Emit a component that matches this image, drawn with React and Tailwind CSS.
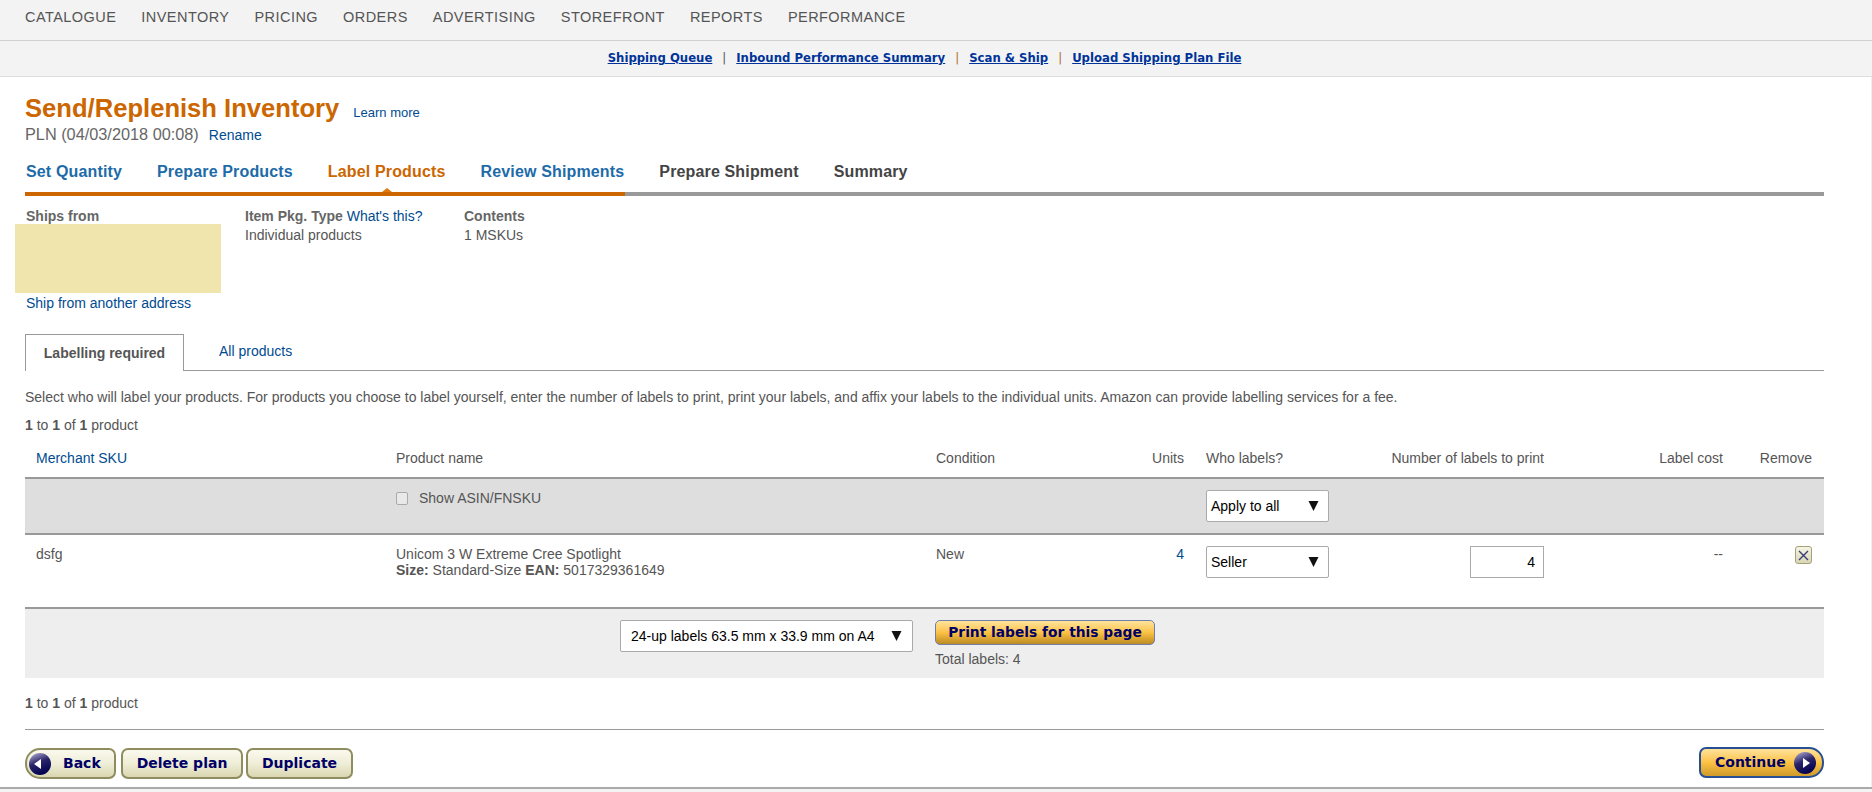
const NAV = ['CATALOGUE', 'INVENTORY', 'PRICING', 'ORDERS', 'ADVERTISING', 'STOREFRONT', 'REPORTS', 'PERFORMANCE']

const STEPS = [
  { label: 'Set Quantity', color: 'text-[#1d6ba8]' },
  { label: 'Prepare Products', color: 'text-[#1d6ba8]' },
  { label: 'Label Products', color: 'text-[#cc6600]' },
  { label: 'Review Shipments', color: 'text-[#1d6ba8]' },
  { label: 'Prepare Shipment', color: 'text-[#444444]' },
  { label: 'Summary', color: 'text-[#444444]' },
]

const TABLE_COLS = 'grid grid-cols-[371px_540px_270px_338px_179px_101px]'
const VERDANA = 'font-["DejaVu_Sans",sans-serif] font-bold text-[#000066]'

function Arrow() {
  return (
    <svg width="11" height="10" viewBox="0 0 11 10" className="shrink-0">
      <polygon points="0.5,0 10.5,0 5.5,10" fill="#111" />
    </svg>
  )
}

function FakeSelect({ children, className }) {
  return (
    <div className={`flex items-center justify-between h-[32px] bg-white border border-[#aaaaaa] rounded-[2px] text-[14px] text-black ${className}`}>
      <span>{children}</span>
      <Arrow />
    </div>
  )
}

function RoundIcon({ dir }) {
  return (
    <svg width="24" height="24" viewBox="0 0 24 24" className="shrink-0">
      <defs>
        <linearGradient id={`orb-${dir}`} x1="0.2" y1="0" x2="0.6" y2="1">
          <stop offset="0" stopColor="#a9a4cc" />
          <stop offset="0.45" stopColor="#2a2468" />
          <stop offset="1" stopColor="#000050" />
        </linearGradient>
      </defs>
      <circle cx="12" cy="12" r="11" fill={`url(#orb-${dir})`} />
      {dir === 'left'
        ? <polygon points="6,12 13,7 13,17" fill="#fff" />
        : <polygon points="17,12 10,7 10,17" fill="#fff" />}
    </svg>
  )
}

function CreamButton({ children, className }) {
  return (
    <button className={`flex items-center h-[31px] border-2 border-[#8f8d5f] rounded-[7px] bg-gradient-to-b from-[#faf9ee] via-[#efeed8] to-[#d9d7b0] text-[14px] ${VERDANA} ${className}`}>
      {children}
    </button>
  )
}

function RemoveButton() {
  return (
    <button className="flex items-center justify-center w-[17px] h-[18px] border border-[#a3a175] rounded-[3px] bg-gradient-to-b from-[#f6f5e6] to-[#d9d7b4]">
      <svg width="11" height="11" viewBox="0 0 11 11">
        <path d="M1 1 L10 10 M10 1 L1 10" stroke="#3a3a78" strokeWidth="1.4" fill="none" />
      </svg>
    </button>
  )
}

export default function App() {
  return (
    <div className='flex flex-col w-[1872px] h-[792px] overflow-hidden bg-white font-["Liberation_Sans",Arial,sans-serif] text-[14px] text-[#555555]'>
      <div className="flex items-start gap-[25px] h-[41px] shrink-0 pt-[8px] pl-[25px] bg-[#f3f3f3] border-b border-[#d0d0d0]">
        {NAV.map((item) => (
          <span key={item} className="text-[14.5px] leading-[18px] tracking-[0.45px] text-[#555555]">{item}</span>
        ))}
      </div>

      <div className="flex items-center h-[36px] shrink-0 bg-[#f3f3f3] border-b border-[#dddddd]">
        <div className='flex items-center justify-center w-[1849px] text-[11.7px] font-["DejaVu_Sans",sans-serif] font-bold text-[#003399]'>
          <a className="underline">Shipping Queue</a>
          <span className="mx-[10px] font-normal text-[#555555]">|</span>
          <a className="underline">Inbound Performance Summary</a>
          <span className="mx-[10px] font-normal text-[#a8701c]">|</span>
          <a className="underline">Scan &amp; Ship</a>
          <span className="mx-[10px] font-normal text-[#a8701c]">|</span>
          <a className="underline">Upload Shipping Plan File</a>
        </div>
      </div>

      <div className="flex-1 border-r border-[#eeeeee]">
        <div className="flex flex-col w-[1849px] px-[25px]">
          <div className="flex items-baseline h-[32px] mt-[15px]">
            <h1 className="text-[25.6px] leading-[32px] font-bold text-[#cc6600]">Send/Replenish Inventory</h1>
            <a className="ml-[14px] text-[13px] text-[#004b91]">Learn more</a>
          </div>
          <div className="flex items-baseline h-[20px] leading-[20px]">
            <span className="text-[16.3px] text-[#666666]">PLN (04/03/2018 00:08)</span>
            <a className="ml-[10px] text-[#004b91]">Rename</a>
          </div>

          <div className="flex gap-[35px] h-[32px] mt-[16px] pl-[1px] text-[16px] leading-[24px] font-bold tracking-[0.15px]">
            {STEPS.map((step) => (
              <span key={step.label} className={step.color}>{step.label}</span>
            ))}
          </div>
          <div className="relative flex h-[4px] bg-[#999999]">
            <div className="w-[600px] bg-[#cc6600]" />
            <div className="absolute left-[357px] top-[-4px] w-0 h-0 border-x-[5px] border-x-transparent border-b-[4px] border-b-[#e07a10]" />
          </div>

          <div className="flex mt-[12px] leading-[16px]">
            <div className="w-[220px]">
              <div className="pl-[1px] font-bold text-[#666666]">Ships from</div>
              <div className="w-[206px] h-[69px] -ml-[10px] bg-[#f0e5ac]" />
              <a className="block mt-[2px] pl-[1px] text-[#004b91]">Ship from another address</a>
            </div>
            <div className="w-[219px]">
              <div>
                <b className="text-[#666666]">Item Pkg. Type</b> <a className="text-[#004b91]">What's this?</a>
              </div>
              <div className="mt-[3px]">Individual products</div>
            </div>
            <div>
              <div className="font-bold text-[#666666]">Contents</div>
              <div className="mt-[3px]">1 MSKUs</div>
            </div>
          </div>

          <div className="flex h-[37px] mt-[23px] border-b border-[#999999]">
            <div className="flex items-center justify-center w-[159px] h-[37px] bg-white border border-b-0 border-[#999999] font-bold text-[#555555]">Labelling required</div>
            <a className="ml-[35px] mt-[9px] leading-[16px] text-[#004b91]">All products</a>
          </div>

          <p className="mt-[18px] leading-[16px]">
            Select who will label your products. For products you choose to label yourself, enter the number of labels to print, print your labels, and affix your labels to the individual units. Amazon can provide labelling services for a fee.
          </p>
          <p className="mt-[12px] leading-[16px]"><b>1</b> to <b>1</b> of <b>1</b> product</p>

          <div className={`${TABLE_COLS} h-[32px] mt-[12px] pt-[5px] leading-[16px]`}>
            <a className="pl-[11px] text-[#004b91]">Merchant SKU</a>
            <span>Product name</span>
            <span className="flex justify-between pr-[22px]">
              <span>Condition</span>
              <span>Units</span>
            </span>
            <span className="flex justify-between">
              <span>Who labels?</span>
              <span>Number of labels to print</span>
            </span>
            <span className="text-right">Label cost</span>
            <span className="pr-[12px] text-right">Remove</span>
          </div>

          <div className={`${TABLE_COLS} h-[58px] pt-[11px] leading-[16px] bg-[#dedede] border-y-2 border-[#999999]`}>
            <span />
            <label className="flex items-start">
              <input type="checkbox" className="appearance-none w-[12px] h-[13px] mt-[2px] bg-[#e9e9e9] border border-[#aaaaaa] rounded-[2px]" />
              <span className="ml-[11px]">Show ASIN/FNSKU</span>
            </label>
            <span />
            <FakeSelect className="w-[123px] pl-[4px] pr-[9px]">Apply to all</FakeSelect>
          </div>

          <div className={`${TABLE_COLS} h-[72px] pt-[11px] leading-[16px]`}>
            <span className="pl-[11px]">dsfg</span>
            <div>
              <div>Unicom 3 W Extreme Cree Spotlight</div>
              <div><b>Size:</b> Standard-Size <b>EAN:</b> 5017329361649</div>
            </div>
            <span className="flex justify-between pr-[22px]">
              <span>New</span>
              <a className="text-[#004b91]">4</a>
            </span>
            <div className="flex justify-between">
              <FakeSelect className="w-[123px] pl-[4px] pr-[9px]">Seller</FakeSelect>
              <div className="flex items-center justify-end w-[74px] h-[32px] pr-[8px] border border-[#aaaaaa] text-black">4</div>
            </div>
            <span className="text-right">--</span>
            <div className="flex justify-end pr-[12px]">
              <RemoveButton />
            </div>
          </div>

          <div className="flex h-[71px] pt-[11px] pl-[595px] bg-[#eeeeee] border-t-2 border-[#999999]">
            <FakeSelect className="w-[293px] pl-[10px] pr-[10px]">24-up labels 63.5 mm x 33.9 mm on A4</FakeSelect>
            <div className="ml-[22px]">
              <button className={`flex items-center justify-center w-[220px] h-[25px] border border-[#6f7fa8] rounded-[5px] bg-gradient-to-b from-[#ffe39a] via-[#fcc243] to-[#bd8b24] text-[13.8px] ${VERDANA}`}>
                Print labels for this page
              </button>
              <div className="mt-[6px] leading-[16px]">Total labels: 4</div>
            </div>
          </div>

          <p className="mt-[17px] leading-[16px]"><b>1</b> to <b>1</b> of <b>1</b> product</p>
          <div className="mt-[18px] border-t border-[#999999]" />

          <div className="flex justify-between mt-[18px]">
            <div className="flex">
              <CreamButton className="w-[91px] rounded-l-[15px] pl-[1px]">
                <RoundIcon dir="left" />
                <span className="ml-[11px]">Back</span>
              </CreamButton>
              <CreamButton className="justify-center w-[122px] ml-[5px]">Delete plan</CreamButton>
              <CreamButton className="justify-center w-[107px] ml-[3px]">Duplicate</CreamButton>
            </div>
            <button className={`flex items-center w-[125px] h-[31px] -mt-[1px] pl-[14px] border-2 border-[#264f94] rounded-l-[7px] rounded-r-[15px] bg-gradient-to-b from-[#ffe39a] via-[#fcc243] to-[#cf9a2c] text-[14px] ${VERDANA}`}>
              <span>Continue</span>
              <span className="ml-[7px]"><RoundIcon dir="right" /></span>
            </button>
          </div>
        </div>
      </div>

      <div className="h-[5px] shrink-0 bg-[#f3f3f3] border-t-2 border-[#aaaaaa]" />
    </div>
  )
}
